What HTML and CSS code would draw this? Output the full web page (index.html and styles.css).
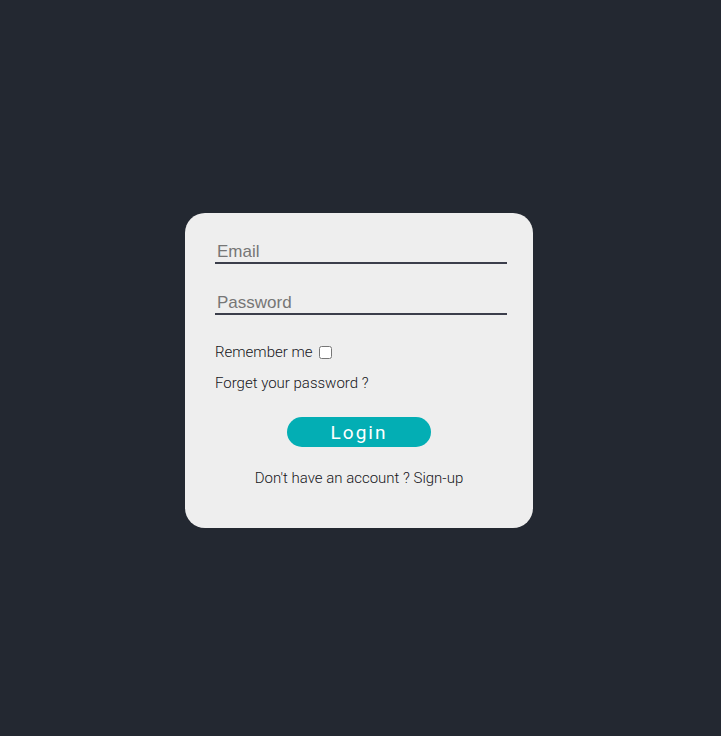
FILE: index.html
```html
<!DOCTYPE html>
<html>
<head>
<meta charset="utf-8">
<link rel="stylesheet" href="styles.css">
</head>
<body>
<div class="page">
  <form class="card">
    <input class="field" type="email" placeholder="Email">
    <input class="field field-pw" type="password" placeholder="Password">
    <label class="remember">Remember me <input class="check" type="checkbox"></label>
    <div class="forgot">Forget your password ?</div>
    <div class="btn-row"><button class="login" type="button">Login</button></div>
    <div class="signup">Don't have an account ? Sign-up</div>
  </form>
</div>
</body>
</html>
```
FILE: styles.css
```css
html, body {
  margin: 0;
  padding: 0;
  background: #232831;
  height: 100%;
}
.page {
  height: 736px;
  display: flex;
  justify-content: flex-start;
  align-items: flex-start;
}
.card {
  margin-top: 213px;
  margin-left: 185px;
  width: 348px;
  height: 315px;
  box-sizing: border-box;
  background: #eeeeee;
  border-radius: 20px;
  padding: 28px 30px 0 30px;
  display: flex;
  flex-direction: column;
  font-family: Roboto, "Noto Sans", sans-serif;
  font-weight: 300;
  font-size: 15px;
  color: #15151a;
}
.field {
  width: 292px;
  height: 23px;
  box-sizing: border-box;
  border: none;
  border-bottom: 2px solid #3b3e4b;
  background: transparent;
  font-family: "Liberation Sans", Arial, sans-serif;
  font-size: 17px;
  padding: 0 2px;
  outline: none;
  margin: 0;
}
.field::placeholder {
  color: #767676;
}
.field-pw {
  margin-top: 28px;
}
.remember {
  margin-top: 28px;
  display: flex;
  align-items: center;
  height: 18px;
}
.check {
  width: 13px;
  height: 13px;
  margin: 1px 0 0 6px;
}
.forgot {
  margin-top: 13px;
  height: 18px;
  line-height: 18px;
}
.btn-row {
  display: flex;
  justify-content: center;
  margin-top: 25px;
}
.login {
  width: 144px;
  height: 30px;
  border: none;
  border-radius: 15px;
  background: #03aeb4;
  color: #ffffff;
  font-family: Roboto, "Noto Sans", sans-serif;
  font-size: 19px;
  letter-spacing: 2px;
  padding: 0;
}
.signup {
  margin-top: 22px;
  text-align: center;
  height: 18px;
  line-height: 18px;
}
```
